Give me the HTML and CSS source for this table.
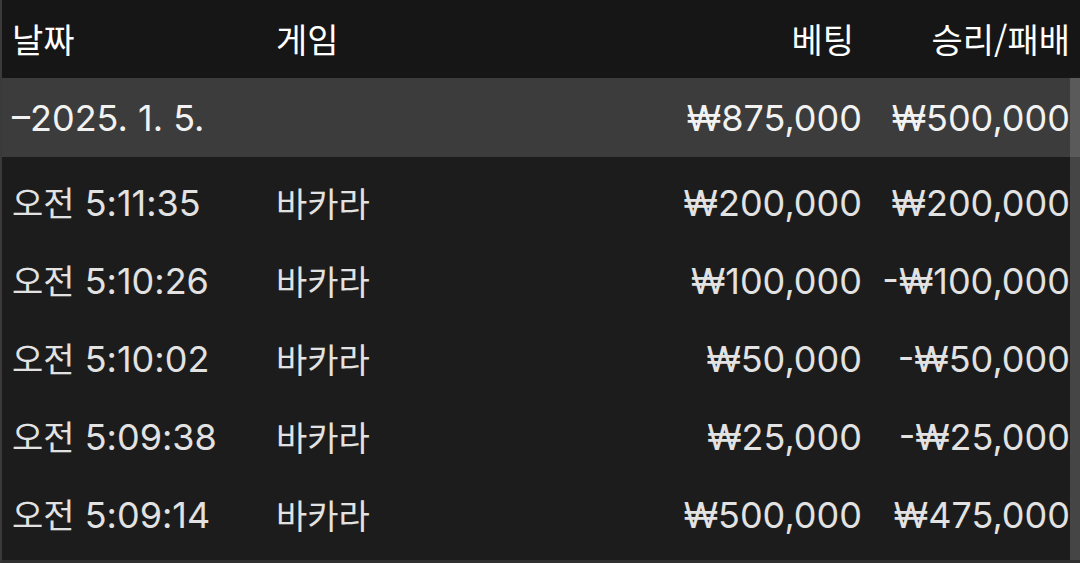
FILE: index.html
```html
<!DOCTYPE html>
<html lang="ko">
<head>
    <meta charset="UTF-8">
    <meta name="viewport" content="width=device-width, initial-scale=1.0">
    <title>베팅 내역</title>
    <link rel="stylesheet" href="styles.css">
</head>
<body>
    <div class="history">
        <!-- Column headings -->
        <div class="row head">
            <div class="cell ko">날짜</div>
            <div class="cell ko">게임</div>
            <div class="cell num ko bet-head">베팅</div>
            <div class="cell num ko">승리/패배</div>
        </div>

        <div class="scroll-area">
            <div class="rows">
                <div class="row day">
                    <div class="cell">–2025. 1. 5.</div>
                    <div class="cell"></div>
                    <div class="cell num">₩875,000</div>
                    <div class="cell num">₩500,000</div>
                </div>

                <div class="entries">
                    <div class="row">
                        <div class="cell"><span class="ko">오전</span> 5:11:35</div>
                        <div class="cell ko">바카라</div>
                        <div class="cell num">₩200,000</div>
                        <div class="cell num">₩200,000</div>
                    </div>
                    <div class="row">
                        <div class="cell"><span class="ko">오전</span> 5:10:26</div>
                        <div class="cell ko">바카라</div>
                        <div class="cell num">₩100,000</div>
                        <div class="cell num">-₩100,000</div>
                    </div>
                    <div class="row">
                        <div class="cell"><span class="ko">오전</span> 5:10:02</div>
                        <div class="cell ko">바카라</div>
                        <div class="cell num">₩50,000</div>
                        <div class="cell num">-₩50,000</div>
                    </div>
                    <div class="row">
                        <div class="cell"><span class="ko">오전</span> 5:09:38</div>
                        <div class="cell ko">바카라</div>
                        <div class="cell num">₩25,000</div>
                        <div class="cell num">-₩25,000</div>
                    </div>
                    <div class="row">
                        <div class="cell"><span class="ko">오전</span> 5:09:14</div>
                        <div class="cell ko">바카라</div>
                        <div class="cell num">₩500,000</div>
                        <div class="cell num">₩475,000</div>
                    </div>
                </div>
            </div>
            <div class="scrollbar"></div>
        </div>
    </div>
</body>
</html>
```

FILE: styles.css
```css
/* General Reset */
body, html {
    margin: 0;
    padding: 0;
    background-color: #1c1c1c;
    font-family: Inter, "Noto Sans CJK KR", sans-serif;
    color: #e2e2e2;
}
.history {
    height: 563px;
    display: flex;
    flex-direction: column;
    border-left: 2px solid #3a3a3a;
    border-bottom: 3px solid #303030;
    box-sizing: border-box;
    overflow: hidden;
}
/* Shared grid for every row */
.row {
    display: grid;
    grid-template-columns: 264px 386px 200px 208px;
    align-items: center;
    padding-left: 10px;
    font-size: 36px;
    line-height: 1;
    height: 78px;
}
.cell {
    white-space: nowrap;
}
.cell.num {
    text-align: right;
}
/* Korean glyphs run a little smaller than the digits */
.ko {
    font-family: "Noto Sans CJK KR", sans-serif;
    font-size: 34px;
}
/* Heading row */
.head {
    background-color: #161616;
    color: #fff;
}
.bet-head {
    padding-right: 8px;
}
/* Table body with scroll strip */
.scroll-area {
    flex: 1;
    display: flex;
}
.rows {
    flex: 1;
}
.scrollbar {
    width: 10px;
    background: linear-gradient(#5a5a5a 0, #5a5a5a 79px, #454545 79px);
}
.day {
    background-color: #3c3c3c;
    color: #f2f2f2;
    height: 79px;
}
.entries {
    padding-top: 7px;
}
```
